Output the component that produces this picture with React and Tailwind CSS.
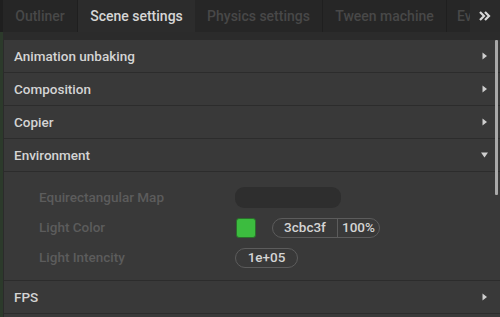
import React from "react";

const Tri = ({ down }) => (
  <svg width="7" height="8" viewBox="0 0 7 8" className="shrink-0">
    {down ? <path d="M0 1.5 L7 1.5 L3.5 6.5 Z" fill="#cfcfcf" /> : <path d="M1.5 0.5 L6 4 L1.5 7.5 Z" fill="#cfcfcf" />}
  </svg>
);

const Header = ({ title, open }) => (
  <div className="h-[33px] flex items-center justify-between pl-[10px] pr-[12px] border-b border-[#2c2c2c]">
    <span className="text-[13.5px] font-medium text-[#d4d4d4]">{title}</span>
    <Tri down={open} />
  </div>
);

export default function App() {
  const tabs = [
    { t: "Outliner", w: "w-[75px]" },
    { t: "Scene settings", w: "w-[117px]", active: true },
    { t: "Physics settings", w: "w-[128px]" },
    { t: "Tween machine", w: "w-[124px]" },
  ];
  return (
    <div className="w-[500px] h-[317px] overflow-hidden bg-[#2b2b2b] flex flex-col" style={{ fontFamily: "Roboto, 'Liberation Sans', sans-serif" }}>
      <div className="h-[32px] flex bg-[#222222] shrink-0">
        <div className="w-[3px] bg-[#1f1f1f]" />
        {tabs.map((x) => (
          <div key={x.t} className={`${x.w} shrink-0 flex items-center justify-center text-[14px] font-medium ${x.active ? "bg-[#2c2c2c] text-[#d6d6d6]" : "bg-[#262626] text-[#484848] border-r border-[#1f1f1f]"}`}>
            {x.t}
          </div>
        ))}
        <div className="flex-1 overflow-hidden bg-[#262626] flex items-center pl-[10px] text-[14px] font-medium text-[#484848] whitespace-nowrap">Events</div>
        <div className="w-[30px] shrink-0 bg-[#2a2a2a] flex items-center justify-center">
          <svg width="12" height="10" viewBox="0 0 12 10">
            <path d="M1 1 L5 5 L1 9 M6 1 L10 5 L6 9" stroke="#d8d8d8" strokeWidth="2.2" fill="none" />
          </svg>
        </div>
      </div>
      <div className="flex-1 flex min-h-0">
        <div className="w-[3px] bg-[#2c3a2b]" />
        <div className="flex-1 pt-[8px] pl-[1px] flex min-h-0">
          <div className="flex-1 bg-[#393939] flex flex-col relative">
            <Header title="Animation unbaking" />
            <Header title="Composition" />
            <Header title="Copier" />
            <Header title="Environment" open />
            <div className="h-[109px] border-b border-[#2c2c2c] pt-[15px] pl-[35px] flex flex-col gap-[9px]">
              <div className="flex items-center h-[21px]">
                <span className="w-[196px] text-[13.5px] font-medium text-[#5c5c5c]">Equirectangular Map</span>
                <div className="w-[106px] h-[21px] rounded-[9px] bg-[#2e2e2e]" />
              </div>
              <div className="flex items-center h-[21px]">
                <span className="w-[197px] text-[13.5px] font-medium text-[#5c5c5c]">Light Color</span>
                <div className="w-[20px] h-[20px] rounded-[3px] bg-[#3cbc3f] border border-[#2a6f2b]" />
                <div className="ml-[16px] h-[20px] flex items-center rounded-full border border-[#5c5c5c] text-[13.5px] font-medium text-[#d4d4d4]">
                  <span className="w-[64px] text-center">3cbc3f</span>
                  <span className="w-[42px] h-full flex items-center justify-center border-l border-[#5c5c5c]">100%</span>
                </div>
              </div>
              <div className="flex items-center h-[21px]">
                <span className="w-[196px] text-[13.5px] font-medium text-[#5c5c5c]">Light Intencity</span>
                <div className="w-[63px] h-[20px] flex items-center justify-center rounded-full border border-[#5c5c5c] text-[13.5px] font-medium text-[#d4d4d4]">1e+05</div>
              </div>
            </div>
            <Header title="FPS" />
            <div className="absolute right-[2px] top-0 w-[3px] h-[155px] bg-[#a9a9a9] rounded-[1px]" />
          </div>
        </div>
      </div>
    </div>
  );
}
